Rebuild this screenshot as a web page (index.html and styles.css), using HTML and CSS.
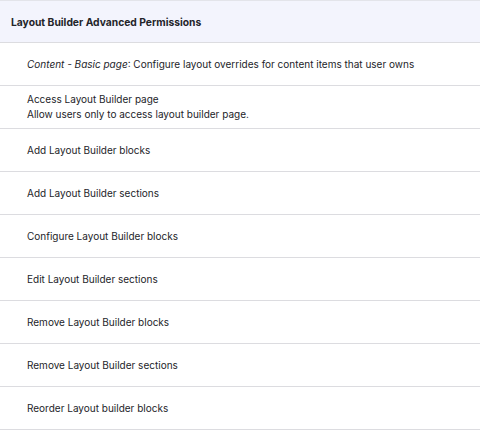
FILE: index.html
```html
<!DOCTYPE html>
<html>
    <head>
        <title>Layout Builder Advanced Permissions</title>
        <link rel="stylesheet" href="styles.css">
    </head>
<body>
    <table class="permissions">
        <thead>
            <tr>
                <th>Layout Builder Advanced Permissions</th>
            </tr>
        </thead>
        <tbody>
            <tr>
                <td><em>Content - Basic page</em>: Configure layout overrides for content items that user owns</td>
            </tr>
            <tr>
                <td>
                    Access Layout Builder page
                    <div class="description">Allow users only to access layout builder page.</div>
                </td>
            </tr>
            <tr><td>Add Layout Builder blocks</td></tr>
            <tr><td>Add Layout Builder sections</td></tr>
            <tr><td>Configure Layout Builder blocks</td></tr>
            <tr><td>Edit Layout Builder sections</td></tr>
            <tr><td>Remove Layout Builder blocks</td></tr>
            <tr><td>Remove Layout Builder sections</td></tr>
            <tr><td>Reorder Layout builder blocks</td></tr>
        </tbody>
    </table>
</body>
</html>
```

FILE: styles.css
```css
body {
    font-family: Inter, "Noto Sans", sans-serif;
    font-size: 10px;
    color: #232429;
    background-color: #fff;
    margin: 0;
}

.permissions {
    width: 100%;
    border-collapse: collapse;
}

.permissions th {
    height: 41px;
    padding: 0 11px;
    text-align: left;
    font-size: 10.3px;
    font-weight: 700;
    background-color: #f3f4fd;
    border-top: 1px solid #e3e4ea;
    border-bottom: 1px solid #dcdce0;
}

.permissions td {
    height: 42px;
    padding: 0 27px;
    line-height: 15px;
    vertical-align: middle;
    border-bottom: 1px solid #dcdce0;
}

.description {
    margin: 0;
}
```
